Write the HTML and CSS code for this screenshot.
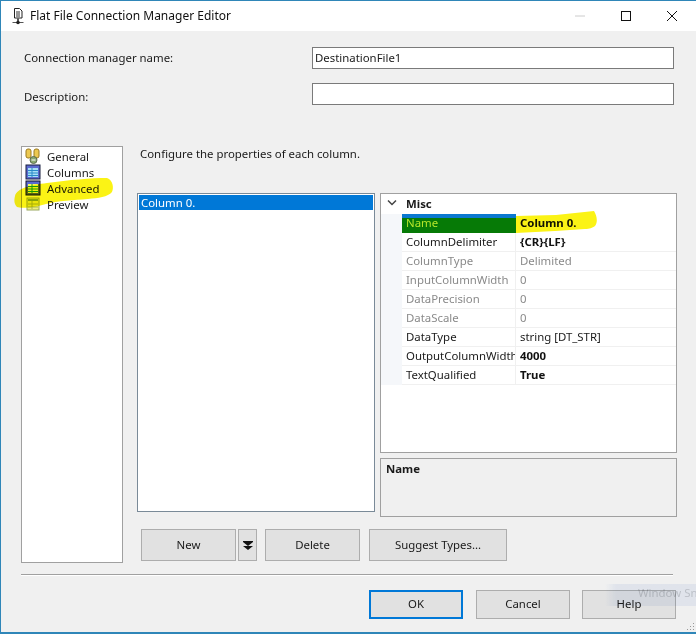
FILE: index.html
```html
<!DOCTYPE html>
<html lang="en">
<head>
<meta charset="utf-8">
<title>Flat File Connection Manager Editor</title>
<link rel="stylesheet" href="styles.css">
</head>
<body>
<div class="window">
  <header class="titlebar">
    <svg class="app-icon" width="14" height="18" viewBox="0 0 14 18"><path d="M3.500 1.500h5l2.500 2.500v7h-7.500z" fill="#fff" stroke="#222"/><path d="M5 5h4M5 7h4M5 9h4" stroke="#333"/><path d="M7 11.500v4" stroke="#222" stroke-width="1.500"/><path d="M1.500 15.500h11" stroke="#555"/><circle cx="7" cy="15.500" r="1.800" fill="#222"/></svg>
    <span class="title">Flat File Connection Manager Editor</span>
    <div class="controls">
      <svg width="12" height="12" viewBox="0 0 12 12"><path d="M1 6h10" stroke="#ccc"/></svg>
      <svg width="12" height="12" viewBox="0 0 12 12"><rect x="1.500" y="1.500" width="9" height="9" fill="none" stroke="#111"/></svg>
      <svg width="12" height="12" viewBox="0 0 12 12"><path d="M1 1l10 10M11 1L1 11" stroke="#111" fill="none"/></svg>
    </div>
  </header>
  <div class="body">
    <div class="field-row">
      <label class="field-label name-label">Connection manager name:</label>
      <div class="input">DestinationFile1</div>
    </div>
    <div class="field-row second">
      <label class="field-label desc-label">Description:</label>
      <div class="input"></div>
    </div>
    <div class="main">
      <nav class="sidebar">
        <div class="nav-item">
          <svg width="16" height="16" viewBox="0 0 16 16"><rect x="1" y="1" width="5" height="9" rx="2" fill="#ecc850" stroke="#9a7a20"/><rect x="9" y="1" width="5" height="9" rx="2" fill="#ecc850" stroke="#9a7a20"/><circle cx="8.500" cy="12" r="3.500" fill="#8aa870" stroke="#5c6c50"/><path d="M6.500 12h4" stroke="#fff"/></svg>
          <span>General</span>
        </div>
        <div class="nav-item">
          <svg width="16" height="16" viewBox="0 0 16 16"><rect x="1" y="1" width="14" height="14" fill="#5a6ad0" stroke="#1a2040"/><rect x="3" y="4" width="10" height="9" fill="#a8e0f6"/><path d="M3 6.500h10M3 9h10M3 11.500h10M7 4v9" stroke="#2a8ac8"/></svg>
          <span>Columns</span>
        </div>
        <div class="nav-item">
          <svg width="16" height="16" viewBox="0 0 16 16"><rect x="1" y="1" width="14" height="14" fill="#5a6ad0" stroke="#14142a"/><rect x="3" y="4" width="10" height="9" fill="#f4f860"/><path d="M3 6.500h10M3 9h10M3 11.500h10M7 4v9" stroke="#1aa030"/></svg>
          <span>Advanced</span>
        </div>
        <div class="nav-item">
          <svg width="16" height="16" viewBox="0 0 16 16"><rect x="2" y="2" width="12" height="12" fill="#eef080" stroke="#9aa860"/><path d="M3 4h10" stroke="#8aaa50" stroke-width="2"/><path d="M3 8h10M3 11h10M7 5v8" stroke="#a8b458"/></svg>
          <span>Preview</span>
        </div>
      </nav>
      <section class="panel">
        <p class="hint">Configure the properties of each column.</p>
        <div class="panes">
          <div class="column-list"><div class="column-row">Column 0.</div></div>
          <div class="right-pane">
            <div class="grid">
              <div class="grid-head">
                <div class="gutter"><svg width="10" height="8" viewBox="0 0 10 8"><path d="M1 1.500l4 4 4-4" fill="none" stroke="#444" stroke-width="1.500"/></svg></div>
                <span>Misc</span>
              </div>
              <div class="grid-row selected"><div class="gutter"></div><div class="prop-name">Name</div><div class="prop-value bold">Column 0.</div></div>
              <div class="grid-row"><div class="gutter"></div><div class="prop-name">ColumnDelimiter</div><div class="prop-value bold">{CR}{LF}</div></div>
              <div class="grid-row off"><div class="gutter"></div><div class="prop-name">ColumnType</div><div class="prop-value">Delimited</div></div>
              <div class="grid-row off"><div class="gutter"></div><div class="prop-name">InputColumnWidth</div><div class="prop-value">0</div></div>
              <div class="grid-row off"><div class="gutter"></div><div class="prop-name">DataPrecision</div><div class="prop-value">0</div></div>
              <div class="grid-row off"><div class="gutter"></div><div class="prop-name">DataScale</div><div class="prop-value">0</div></div>
              <div class="grid-row"><div class="gutter"></div><div class="prop-name">DataType</div><div class="prop-value">string [DT_STR]</div></div>
              <div class="grid-row"><div class="gutter"></div><div class="prop-name">OutputColumnWidth</div><div class="prop-value bold">4000</div></div>
              <div class="grid-row"><div class="gutter"></div><div class="prop-name">TextQualified</div><div class="prop-value bold">True</div></div>
            </div>
            <div class="help-box">Name</div>
          </div>
        </div>
        <div class="actions">
          <button class="btn btn-new">New</button>
          <button class="btn btn-arrow"><svg width="10" height="9" viewBox="0 0 10 9"><path d="M0 0h10v1H0zM0 1h10L5 5zM0 5h10L5 9z" fill="#111"/></svg></button>
          <button class="btn btn-delete">Delete</button>
          <button class="btn btn-suggest">Suggest Types...</button>
        </div>
      </section>
    </div>
    <hr class="divider">
    <footer class="footer">
      <button class="btn dlg default">OK</button>
      <button class="btn dlg">Cancel</button>
      <button class="btn dlg">Help</button>
    </footer>
  </div>
  <svg class="marker" width="696" height="634" viewBox="0 0 696 634">
    <path d="M15 196c2-8 16-11 32-13 22-3 44-5 60-5 6 2 7 10 5 14-4 5-14 6-24 7-14 1-30 2-42 5-10 3-24 5-29 3-3-3-3-7-2-11z" fill="#fbf315"/>
    <path d="M516 216l40-1 38-4c3 5 4 11 1 15-3 2-5 3-10 3l-30 2-39 2z" fill="#fbf315"/>
  </svg>
  <div class="watermark">Window Sn</div>
  <svg class="grip" width="10" height="10" viewBox="0 0 10 10"><path d="M8 1h1v1H8zM5 4h1v1H5zM8 4h1v1H8zM2 7h1v1H2zM5 7h1v1H5zM8 7h1v1H8z" fill="#999"/></svg>
</div>
</body>
</html>
```
FILE: styles.css
```css
* { box-sizing: border-box; }
html, body { margin: 0; padding: 0; }
body {
  width: 696px;
  height: 634px;
  overflow: hidden;
  font-family: "Noto Sans", "Liberation Sans", sans-serif;
  font-size: 11.4px;
  color: #1a1a1a;
  background: #fff;
}
.window {
  position: relative;
  width: 696px;
  height: 634px;
  border-top: 1px solid #2f86b8;
  border-bottom: 2px solid #2f86b8;
  border-left: 1px solid #2f86b8;
  background: #f0f0f0;
  display: flex;
  flex-direction: column;
}
.titlebar {
  height: 30px;
  flex: none;
  background: #fff;
  display: flex;
  align-items: center;
  padding: 0 0 0 10px;
  font-size: 12px;
}
.app-icon { margin-right: 5px; margin-top: -1px; }
.title { flex: 1; color: #111; margin-top: -1px; }
.controls { display: flex; gap: 34px; padding-right: 18px; margin-top: -1px; }
.body { flex: 1; padding: 16px 0 0 0; display: flex; flex-direction: column; }
.field-row { display: flex; align-items: center; height: 22px; padding-left: 23px; }
.field-row.second { margin-top: 14px; }
.field-label { width: 288px; flex: none; }
.name-label { margin-bottom: 2px; }
.desc-label { margin-top: 4px; }
.input {
  width: 362px;
  height: 22px;
  background: #fff;
  border: 1px solid #7a7a7a;
  padding: 2px 2px;
  line-height: 16px;
}
.main { display: flex; margin-top: 41px; padding-left: 20px; }
.sidebar {
  width: 102px;
  height: 417px;
  background: #fff;
  border: 1px solid #a0a0a0;
  padding: 1px 3px;
  flex: none;
}
.nav-item { display: flex; align-items: center; gap: 6px; height: 16px; }
.nav-item svg { flex: none; }
.panel { margin-left: 14px; display: flex; flex-direction: column; }
.hint { margin: 0 0 0 3px; height: 47px; line-height: 15px; padding-top: 0; }
.panes { display: flex; gap: 5px; align-items: flex-start; }
.column-list {
  width: 238px;
  height: 319px;
  background: #fff;
  border: 1px solid #7a8a98;
  padding: 1px;
}
.column-row { background: #0078d7; color: #fff; height: 15px; line-height: 15px; padding-left: 2px; }
.right-pane { width: 297px; display: flex; flex-direction: column; gap: 5px; }
.grid { height: 260px; background: #fff; border: 1px solid #a0a0a0; }
.grid-head { display: flex; height: 20px; align-items: center; font-weight: 700; color: #1a1a1a; }
.gutter { width: 21px; flex: none; display: flex; align-items: center; justify-content: center; align-self: stretch; background: #f5f7fa; }
.grid-head .gutter { background: #fff; padding-bottom: 2px; }
.grid-head span { padding: 0 0 2px 4px; }
.grid-row { display: flex; height: 19px; line-height: 18px; }
.prop-name { width: 114px; flex: none; padding-left: 4px; overflow: hidden; white-space: nowrap; border-right: 1px solid #f0f0f0; border-bottom: 1px solid #f0f0f0; }
.prop-value { flex: 1; padding-left: 4px; border-bottom: 1px solid #f0f0f0; }
.bold { font-weight: 700; color: #111; }
.off { color: #8a8a8a; }
.selected .prop-name {
  background: linear-gradient(#0a78d0 0 4px, #067a06 4px);
  color: #b6e62a;
  border: 0;
}
.selected .prop-value { border-bottom: 0; }
.help-box { height: 59px; border: 1px solid #a0a0a0; padding: 2px 5px; font-weight: 700; background: #f0f0f0; }
.actions { display: flex; margin-top: 12px; margin-left: 4px; }
.btn {
  font: inherit;
  color: #1a1a1a;
  background: #e1e1e1;
  border: 1px solid #adadad;
  padding: 0 0 2px;
  height: 32px;
}
.btn-new { width: 95px; }
.btn-arrow { width: 19px; margin-left: 2px; display: flex; align-items: center; justify-content: center; padding: 0; }
.btn-delete { width: 95px; margin-left: 8px; }
.btn-suggest { width: 138px; margin-left: 9px; }
.divider { border: 0; border-top: 1px solid #a0a0a0; border-bottom: 1px solid #fff; height: 2px; width: 652px; margin: 11px 0 0 20px; }
.footer { display: flex; margin-top: 14px; margin-left: 368px; gap: 13px; }
.dlg { width: 94px; height: 29px; }
.dlg.default { border: 2px solid #0078d7; }
.dlg + .dlg + .dlg { margin-left: -1px; }
.marker { position: absolute; left: -1px; top: -1px; mix-blend-mode: multiply; pointer-events: none; }
.watermark {
  position: absolute;
  left: 604px; top: 583px; width: 92px; height: 22px;
  padding: 1px 0 0 33px;
  white-space: nowrap;
  overflow: hidden;
  color: #c8ccd4;
  background: linear-gradient(90deg, rgba(224, 232, 246, 0), rgba(224, 232, 246, .55) 12%);
  mix-blend-mode: multiply;
}
.grip { position: absolute; right: 1px; bottom: 0; }
```
